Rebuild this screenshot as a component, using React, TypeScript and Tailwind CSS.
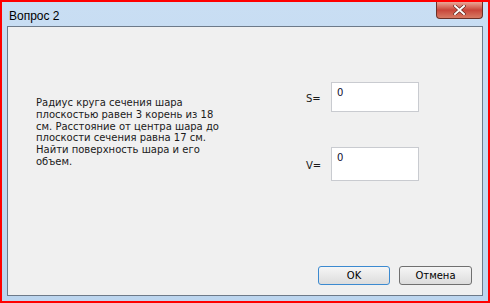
import React from 'react';

const lines = [
  'Радиус круга сечения шара',
  'плоскостью равен 3 корень из 18',
  'см. Расстояние от центра шара до',
  'плоскости сечения равна 17 см.',
  'Найти поверхность шара и его',
  'объем.',
];

const Field = ({ label, height }: { label: string; height: string }) => (
  <div className="flex items-center">
    <span className="w-[26px] pl-[1px] pt-[3px] text-[10px] text-[#1a1a1a]">{label}</span>
    <div className={`w-[88px] ${height} border border-[#c9cbd0] bg-white px-[5px] pt-[2px] text-[10px] text-[#101030]`}>
      0
    </div>
  </div>
);

export default function App() {
  return (
    <div
      className="w-[490px] h-[303px] border-2 border-[#ff0000] bg-gradient-to-b from-[#c9def3] to-[#bcd5ee] flex flex-col"
      style={{ fontFamily: '"DejaVu Sans", "Liberation Sans", sans-serif' }}
    >
      {/* Title bar */}
      <div className="h-[24px] flex justify-between pl-[7px] pr-[5px]">
        <span
          className="pt-[5px] text-[12px] text-black"
          style={{ fontFamily: '"Liberation Sans", Arial, sans-serif' }}
        >
          Вопрос 2
        </span>
        <div className="w-[47px] h-[17px] rounded-b-[4px] border border-t-0 border-[#6b3027] bg-gradient-to-b from-[#e9a596] via-[#c8453a] to-[#d77a64] flex items-center justify-center">
          <svg width="13" height="10" viewBox="0 0 13 10">
            <path d="M2 1 L11 9 M11 1 L2 9" stroke="#5a2018" strokeWidth="3.2" strokeLinecap="square" />
            <path d="M2 1 L11 9 M11 1 L2 9" stroke="#ffffff" strokeWidth="2" strokeLinecap="square" />
          </svg>
        </div>
      </div>

      {/* Client area */}
      <div className="mx-[5px] h-[270px] border border-[#6d7a89] bg-[#f0f0f0] flex flex-col">
        <div className="flex pl-[28px] pt-[55px]">
          <div className="w-[269px] mt-[15px] text-[10px] leading-[11.8px] text-[#1a1a1a]">
            {lines.map((l) => (
              <div key={l}>{l}</div>
            ))}
          </div>
          <div className="flex flex-col gap-[35px]">
            <Field label="S=" height="h-[30px]" />
            <Field label="V=" height="h-[34px]" />
          </div>
        </div>

        <div className="mt-auto flex justify-end gap-[9px] pr-[10px] pb-[10px]">
          <button className="w-[72px] h-[19px] rounded-[3px] border border-[#3c8ad0] bg-gradient-to-b from-[#f6f6f6] to-[#dcdcdc] text-[10px] text-black">
            OK
          </button>
          <button className="w-[73px] h-[19px] rounded-[3px] border border-[#707070] bg-gradient-to-b from-[#f6f6f6] to-[#dcdcdc] text-[10px] text-black">
            Отмена
          </button>
        </div>
      </div>
    </div>
  );
}
